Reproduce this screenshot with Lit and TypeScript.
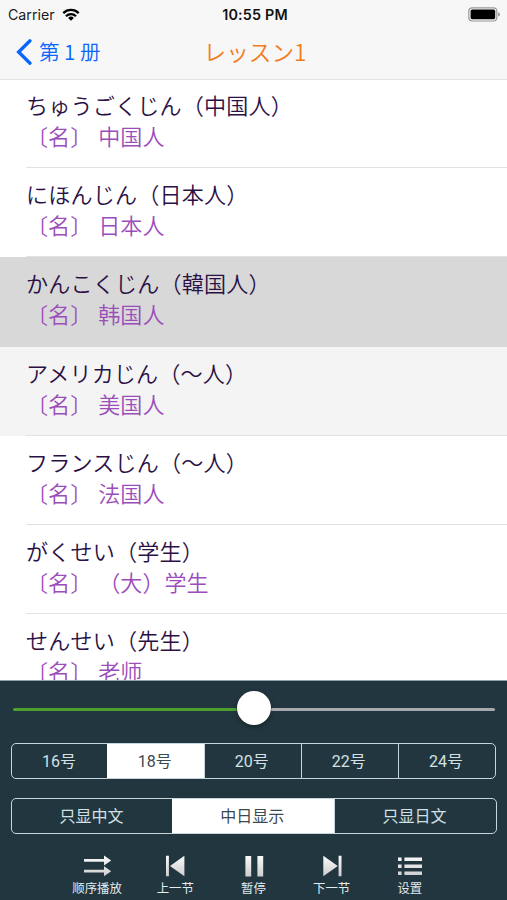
import { LitElement, html, css, svg } from "lit";
import { customElement, property, state } from "lit/decorators.js";
import { classMap } from "lit/directives/class-map.js";

interface Word {
  kana: string;
  meaning: string;
  tone?: "selected" | "fading";
}

const WORDS: Word[] = [
  { kana: "ちゅうごくじん（中国人）", meaning: "〔名〕 中国人" },
  { kana: "にほんじん（日本人）", meaning: "〔名〕 日本人" },
  { kana: "かんこくじん（韓国人）", meaning: "〔名〕 韩国人", tone: "selected" },
  { kana: "アメリカじん（～人）", meaning: "〔名〕 美国人", tone: "fading" },
  { kana: "フランスじん（～人）", meaning: "〔名〕 法国人" },
  { kana: "がくせい（学生）", meaning: "〔名〕 （大）学生" },
  { kana: "せんせい（先生）", meaning: "〔名〕 老师" },
];

@customElement("status-bar")
class StatusBar extends LitElement {
  static styles = css`
    :host {
      display: grid;
      grid-template-columns: 1fr auto 1fr;
      align-items: center;
      height: 27px;
      padding: 0 7px 0 8px;
      font: 14.2px/27px Inter, "Liberation Sans", sans-serif;
      color: #1b1b1b;
    }
    .left { display: flex; align-items: center; gap: 7px; }
    .time { font-weight: 600; font-size: 14.3px; letter-spacing: 0.2px; color: #111; padding: 1px 0 0 2px; }
    .battery { justify-self: end; }
    svg { display: block; }
  `;
  render() {
    return html`
      <div class="left">
        <span>Carrier</span>
        <svg width="18" height="13" viewBox="0 0 18 13">
          <g fill="none" stroke="#000" stroke-width="2.3">
            <path d="M1.3 5.1a11 11 0 0 1 15.4 0" />
            <path d="M4 8.2a7.1 7.1 0 0 1 10 0" />
          </g>
          <path d="M9 12.8 6.1 9.9a4.1 4.1 0 0 1 5.8 0Z" />
        </svg>
      </div>
      <span class="time">10:55 PM</span>
      <svg class="battery" width="32" height="15" viewBox="0 0 32 15">
        <rect x="0.8" y="0.8" width="28" height="13.2" rx="3.4" fill="none" stroke="#999" stroke-width="1.2" />
        <rect x="2.6" y="2.6" width="24.6" height="9.6" rx="1.6" />
        <path d="M30.2 5.2q1.6.6 1.6 2.2t-1.6 2.2Z" fill="#888" />
      </svg>
    `;
  }
}

@customElement("segment-control")
class SegmentControl extends LitElement {
  @property({ attribute: false }) options: string[] = [];
  @property({ type: Number }) selected = 0;
  static styles = css`
    :host {
      display: flex;
      box-sizing: border-box;
      height: 36px;
      border: 1.5px solid #c5d5d9;
      border-radius: 5px;
      overflow: hidden;
      font: 16px/36px Roboto, "Noto Sans CJK SC", sans-serif;
      color: #d3e0e4;
    }
    .seg { flex: 1; text-align: center; box-sizing: border-box; padding-right: 2px; }
    .seg + .seg { border-left: 1.5px solid #c5d5d9; }
    .seg.on { background: #fff; color: #3c4a50; border-color: #fff; margin-left: -1.5px; }
  `;
  render() {
    return this.options.map(
      (o, i) => html`<div class=${classMap({ seg: true, on: i === this.selected })}>${o}</div>`
    );
  }
}

const metal = svg`<defs><linearGradient id="m" x1="0" y1="0" x2="0" y2="24" gradientUnits="userSpaceOnUse">
  <stop offset="0" stop-color="#fff" /><stop offset="1" stop-color="#c9c9cb" /></linearGradient></defs>`;

const ICONS = {
  order: svg`<path fill="url(#m)" d="M2 5h20V1.4l7.2 5-7.2 5V7.8H2Z M2 15.8h20v-3.6l7.2 5-7.2 5v-3.6H2Z" />`,
  prev: svg`<path fill="url(#m)" d="M6 1.8h2.9v20.4H6Z M24.4 1.8v20.4L10 12Z" />`,
  pause: svg`<path fill="url(#m)" d="M6.4 2h5.8v20.4H6.4Z M18.4 2h5.8v20.4h-5.8Z" />`,
  next: svg`<path fill="url(#m)" d="M6.3 1.8v20.4L20.8 12Z M21.6 1.8h2.9v20.4h-2.9Z" />`,
  list: svg`<path fill="url(#m)" d="M3 3.4h3.6V7H3Z M9.4 3.4H27V7H9.4Z M3 10.4h3.6V14H3Z M9.4 10.4H27V14H9.4Z M3 17.4h3.6V21H3Z M9.4 17.4H27V21H9.4Z" />`,
};

const ACTIONS = [
  { icon: ICONS.order, label: "顺序播放" },
  { icon: ICONS.prev, label: "上一节" },
  { icon: ICONS.pause, label: "暂停" },
  { icon: ICONS.next, label: "下一节" },
  { icon: ICONS.list, label: "设置" },
];

@customElement("player-toolbar")
class PlayerToolbar extends LitElement {
  static styles = css`
    :host {
      display: grid;
      grid-template-columns: repeat(5, 78.2px);
      justify-content: center;
      font: 12.4px/16px "Noto Sans CJK SC", sans-serif;
      color: #e3ecef;
    }
    .action { display: flex; flex-direction: column; align-items: center; gap: 2px; white-space: nowrap; }
    svg { display: block; }
  `;
  render() {
    return ACTIONS.map(
      (a) => html`<div class="action">
        <svg width="30" height="24" viewBox="0 0 30 24">${metal}${a.icon}</svg>
        <span>${a.label}</span>
      </div>`
    );
  }
}

@customElement("app-root")
class AppRoot extends LitElement {
  @state() private progress = 50;

  static styles = css`
    :host {
      display: flex;
      flex-direction: column;
      height: 900px;
      overflow: hidden;
      background: #fff;
      font-family: "Noto Sans CJK JP", "Noto Sans CJK SC", sans-serif;
    }
    .head { flex: none; box-sizing: border-box; height: 79px; background: #f7f7f7; box-shadow: 0 1px 0 #e2e2e2; z-index: 1; }
    .nav { display: grid; grid-template-columns: 1fr auto 1fr; align-items: center; height: 49px; padding: 0 16px; }
    .back { display: flex; align-items: center; gap: 7px; color: #0a66fb; font-size: 20.5px; line-height: 49px; font-weight: 350; white-space: nowrap; }
    .title { font-size: 22.6px; line-height: 48px; color: #f47b20; font-weight: 350; padding-left: 3px; white-space: nowrap; }
    .list { flex: 1; min-height: 0; overflow: hidden; }
    .row { box-sizing: border-box; height: 89.2px; padding: 10px 0 0 26px; position: relative; }
    .row::after { content: ""; position: absolute; left: 26px; right: 0; bottom: 0; height: 1px; background: #e2e2e4; }
    .selected { background: #d8d8d8; }
    .selected::after { background: #d8d8d8; }
    .fading { background: #f4f4f4; }
    .kana, .meaning { line-height: 31px; white-space: pre; font-size: 22.1px; font-weight: 350; }
    .kana { color: #2b1045; letter-spacing: 0.15px; }
    .meaning { color: #9b4dba; font-family: "Noto Sans CJK SC", sans-serif; word-spacing: 1px; }
    .panel { flex: none; box-sizing: border-box; height: 220px; background: #22363f; border-top: 1px solid #91a1a5; padding: 0 11px; }
    .slider { display: flex; align-items: center; height: 54px; padding: 0 1px 0 2px; }
    .track { height: 2.5px; margin-top: 3px; background: #a8a8ad; flex: 1; border-radius: 2px; }
    .done { background: #4d9f2e; }
    .knob { width: 34px; height: 34px; border-radius: 50%; background: #fff; box-shadow: 0 2px 5px #0005; }
    .sizes { margin-top: 8px; }
    .langs { margin: 19px -1px 0 0; }
    .tools { margin-top: 20px; }
  `;

  render() {
    return html`
      <header class="head">
        <status-bar></status-bar>
        <nav class="nav">
          <div class="back">
            <svg width="16" height="26" viewBox="0 0 16 26">
              <path d="M14 1.8 2.6 13 14 24.2" fill="none" stroke="#0a66fb" stroke-width="3.3" stroke-linecap="round" />
            </svg>
            <span>第 1 册</span>
          </div>
          <div class="title">レッスン1</div>
        </nav>
      </header>
      <main class="list">
        ${WORDS.map(
          (w) => html`<article class=${classMap({ row: true, selected: w.tone === "selected", fading: w.tone === "fading" })}>
            <div class="kana" lang="ja">${w.kana}</div>
            <div class="meaning" lang="zh-CN">${w.meaning}</div>
          </article>`
        )}
      </main>
      <footer class="panel">
        <div class="slider">
          <div class="track done" style="flex-grow:${this.progress}"></div>
          <div class="knob"></div>
          <div class="track" style="flex-grow:${100 - this.progress}"></div>
        </div>
        <segment-control class="sizes" .options=${["16号", "18号", "20号", "22号", "24号"]} .selected=${1}></segment-control>
        <segment-control class="langs" .options=${["只显中文", "中日显示", "只显日文"]} .selected=${1}></segment-control>
        <player-toolbar class="tools"></player-toolbar>
      </footer>
    `;
  }
}
